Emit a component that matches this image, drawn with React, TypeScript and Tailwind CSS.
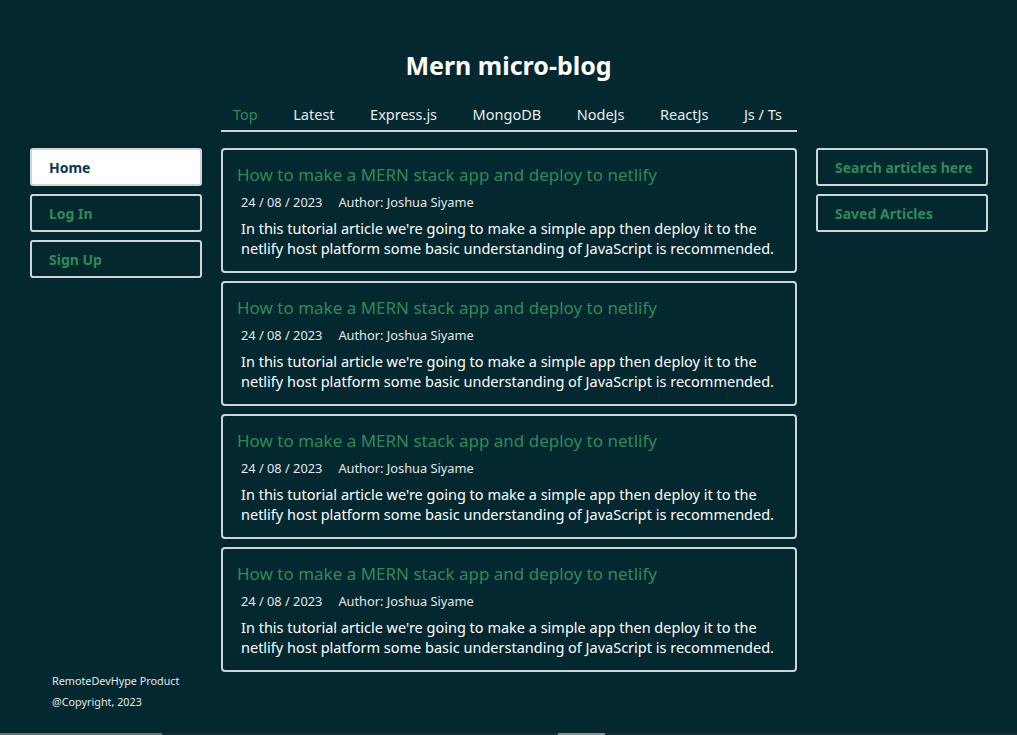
import React from "react";

const tabs = ["Top", "Latest", "Express.js", "MongoDB", "NodeJs", "ReactJs", "Js / Ts"];

const posts = [1, 2, 3, 4].map((id) => ({
  id,
  title: "How to make a MERN stack app and deploy to netlify",
  date: "24 / 08 / 2023",
  author: "Joshua Siyame",
  body: "In this tutorial article we're going to make a simple app then deploy it to the netlify host platform some basic understanding of JavaScript is recommended.",
}));

function SideButton({ label, active }: { label: string; active?: boolean }) {
  return (
    <button
      className={`h-[38px] w-full whitespace-nowrap rounded-[3px] border-2 border-[#cfd4d6] px-[17px] text-left text-[14px] font-bold ${
        active ? "bg-white text-[#0b3656]" : "bg-transparent text-[#2e8b57]"
      }`}
    >
      {label}
    </button>
  );
}

export default function App() {
  return (
    <div
      className="relative min-h-[735px] bg-[#04282f] text-white"
      style={{ fontFamily: '"Noto Sans", "Open Sans", sans-serif' }}
    >
      <h1 className="pt-[46px] text-center text-[25px] font-bold leading-[38px]">Mern micro-blog</h1>

      <div className="mt-[18px] grid grid-cols-[172px_576px_172px] gap-x-[19px] pl-[30px]">
        <div />
        <nav className="flex h-[30px] items-start border-b-2 border-[#cfd4d6] pl-[12px] pt-[2px] text-[14.5px] leading-[20px]">
          {tabs.map((t, i) => (
            <span
              key={t}
              className={`${i === 0 ? "text-[#2e8b57]" : "text-[#e8ecee]"} ${i === tabs.length - 1 ? "" : "mr-[35.5px]"}`}
            >
              {t}
            </span>
          ))}
        </nav>
        <div />

        <aside className="mt-[16px] flex flex-col gap-[8px]">
          <SideButton label="Home" active />
          <SideButton label="Log In" />
          <SideButton label="Sign Up" />
        </aside>

        <main className="mt-[16px] flex flex-col gap-[8px]">
          {posts.map((p) => (
            <article key={p.id} className="h-[125px] rounded-[4px] border-2 border-[#cfd4d6] px-[14px] pt-[13px]">
              <h2 className="text-[17px] leading-[24px] text-[#2e8b57]">{p.title}</h2>
              <div className="mt-[6px] flex gap-[16px] pl-[4px] text-[12.8px] leading-[18px] text-[#e3e7e9]">
                <span>{p.date}</span>
                <span>Author: {p.author}</span>
              </div>
              <p className="mt-[7px] pl-[4px] text-[14.5px] leading-[20px] text-white">{p.body}</p>
            </article>
          ))}
        </main>

        <aside className="mt-[16px] flex flex-col gap-[8px]">
          <SideButton label="Search articles here" />
          <SideButton label="Saved Articles" />
        </aside>
      </div>

      <footer className="-mt-[2px] pl-[52px] text-[10.8px] leading-[21px] text-[#e3e7e9]">
        <p>RemoteDevHype Product</p>
        <p>@Copyright, 2023</p>
      </footer>

      <div className="absolute bottom-0 left-0 flex h-[2px] w-full bg-[#1b2b2f]">
        <div className="w-[162px] bg-[#6b6f70]" />
        <div className="ml-[396px] w-[47px] bg-[#8a8d8e]" />
      </div>
    </div>
  );
}
